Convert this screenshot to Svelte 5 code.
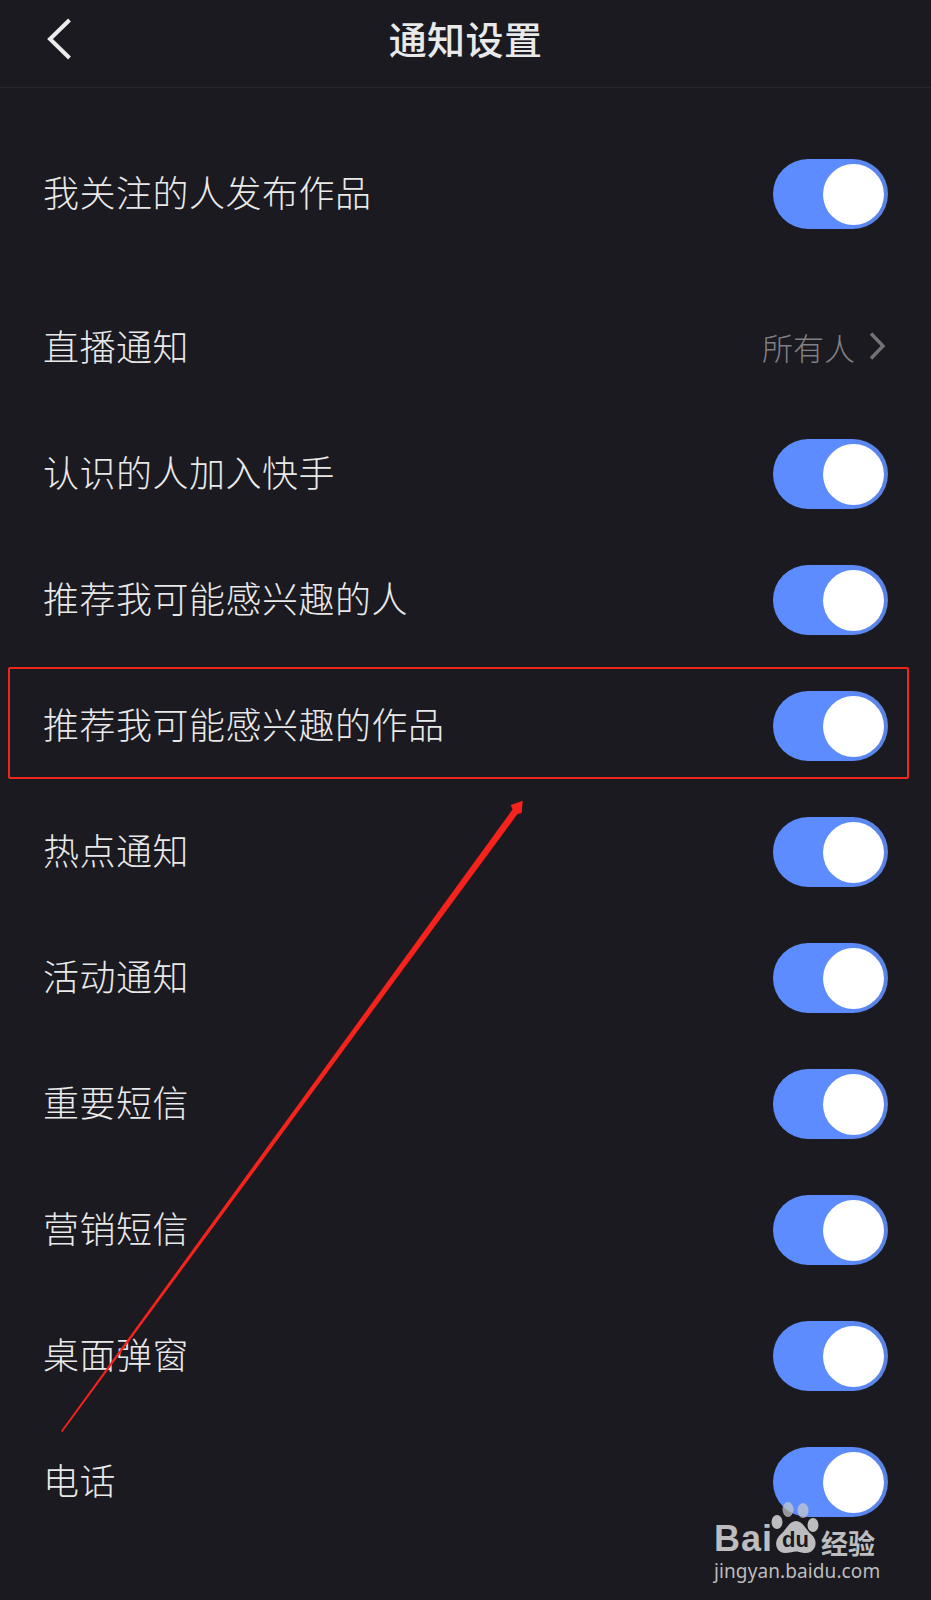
<script>
  // notification settings list, annotation and watermark sit on top
  const rows = [
    "认识的人加入快手",
    "推荐我可能感兴趣的人",
    "推荐我可能感兴趣的作品",
    "热点通知",
    "活动通知",
    "重要短信",
    "营销短信",
    "桌面弹窗",
    "电话"
  ]
</script>

<div class="page">
  <header class="nav">
    <svg class="back" width="28" height="44" viewBox="0 0 28 44" aria-hidden="true">
      <path d="M24.5 3 L5 22 L24.5 41" fill="none" stroke="#ececec" stroke-width="4" />
    </svg>
    <h1>通知设置</h1>
  </header>

  <section class="first">
    <div class="row">
      <span class="label">我关注的人发布作品</span>
      <span class="toggle"><span class="knob"></span></span>
    </div>
  </section>

  <section>
    <div class="row">
      <span class="label">直播通知</span>
      <span class="value">
        所有人
        <svg width="18" height="30" viewBox="0 0 18 30" aria-hidden="true">
          <path d="M2 2.5 L14 15 L2 27.5" fill="none" stroke="#737377" stroke-width="3.4" />
        </svg>
      </span>
    </div>
    {#each rows as label}
      <div class="row">
        <span class="label">{label}</span>
        <span class="toggle"><span class="knob"></span></span>
      </div>
    {/each}
  </section>

  <div class="box"></div>
  <svg class="arrow" width="931" height="1600" viewBox="0 0 931 1600" aria-hidden="true">
    <polygon points="61,1431 62.4,1432 517.5,814 521.7,813 522.7,800.7 510.7,805 512.5,809.6" fill="#f6231c" />
  </svg>

  <div class="mark">
    <div class="logo">
      <span class="bai">Bai</span>
      <span class="paw">
        <svg width="50" height="56" viewBox="0 0 50 56" aria-hidden="true">
          <ellipse cx="17" cy="7.5" rx="5.5" ry="7.5" fill="#c9c9cc" fill-opacity="0.72" />
          <ellipse cx="32" cy="8.5" rx="5.5" ry="7.5" fill="#c9c9cc" fill-opacity="0.72" />
          <ellipse cx="6" cy="20" rx="5.5" ry="7" fill="#bdbdbf" />
          <ellipse cx="42" cy="23" rx="5.5" ry="7" fill="#bdbdbf" />
          <path d="M25 19 C32 19 34 27 41 33 C48 40 44 51 35 51 C30 51 28 49.5 25 49.5 C22 49.5 19 51 14 51 C5 51 2 40 9 33 C16 27 18 19 25 19 Z" fill="#bdbdbf" />
        </svg>
        <span class="du">du</span>
      </span>
      <span class="jy">经验</span>
    </div>
    <div class="url">jingyan.baidu.com</div>
  </div>
</div>

<style>
  :global(body) {
    margin: 0;
    background: #1a1a20;
  }

  .page {
    position: relative;
    width: 931px;
    height: 1600px;
    overflow: hidden;
    background: #1a1a20;
    color: #e9e9e9;
    font-family: "Noto Sans CJK SC", "Noto Sans", sans-serif;
  }

  .nav {
    height: 87px;
    display: flex;
    align-items: center;
    justify-content: center;
    position: relative;
    border-bottom: 1px solid #26262c;
    box-sizing: content-box;
  }

  .nav h1 {
    margin: 0 0 12px;
    font-size: 38px;
    font-weight: 500;
    line-height: 1;
    letter-spacing: 0.4px;
  }

  .back {
    position: absolute;
    left: 45px;
    top: 17px;
  }

  .first {
    padding-top: 43px;
    margin-bottom: 28px;
  }

  .row {
    height: 126px;
    padding: 0 43px;
    display: flex;
    align-items: center;
    justify-content: space-between;
  }

  .label {
    font-size: 36px;
    font-weight: 300;
    line-height: 1;
    letter-spacing: 0.5px;
    margin-bottom: 6px;
  }

  .value {
    display: flex;
    align-items: center;
    gap: 14px;
    padding-right: 1px;
    margin-bottom: 4px;
    font-size: 31px;
    font-weight: 300;
    line-height: 1;
    color: #808084;
  }

  .toggle {
    display: block;
    position: relative;
    width: 115px;
    height: 70px;
    border-radius: 35px;
    background: linear-gradient(90deg, #5c8cff 55%, #5a82e0 100%);
  }

  .knob {
    position: absolute;
    top: 5px;
    right: 4px;
    width: 61px;
    height: 61px;
    border-radius: 50%;
    background: #fff;
  }

  .box {
    position: absolute;
    left: 8px;
    top: 667px;
    width: 901px;
    height: 112px;
    box-sizing: border-box;
    border: 2px solid #ee261c;
    border-radius: 2px;
  }

  .arrow {
    position: absolute;
    left: 0;
    top: 0;
    pointer-events: none;
  }

  .mark {
    position: absolute;
    left: 714px;
    top: 1502px;
    width: 170px;
    color: #bdbdbf;
    font-family: "Liberation Sans", "Noto Sans CJK SC", sans-serif;
  }

  .logo {
    display: flex;
    align-items: flex-end;
    height: 56px;
  }

  .bai {
    width: 57px;
    font-size: 36px;
    font-weight: 700;
    line-height: 1;
    margin-bottom: 1px;
    letter-spacing: 1px;
  }

  .paw {
    position: relative;
    display: block;
    flex: none;
    width: 50px;
    height: 56px;
  }

  .paw svg {
    display: block;
  }

  .du {
    position: absolute;
    left: 11px;
    top: 27px;
    font-size: 22px;
    line-height: 1;
    font-weight: 700;
    color: #1a1a20;
  }

  .jy {
    flex: none;
    font-family: "Noto Sans CJK SC", sans-serif;
    font-size: 27px;
    font-weight: 700;
    line-height: 1;
    margin-bottom: 2px;
  }

  .url {
    margin-top: 2px;
    font-family: "Noto Sans", sans-serif;
    font-size: 19px;
    line-height: 22px;
    white-space: nowrap;
    letter-spacing: 0.1px;
  }
</style>
